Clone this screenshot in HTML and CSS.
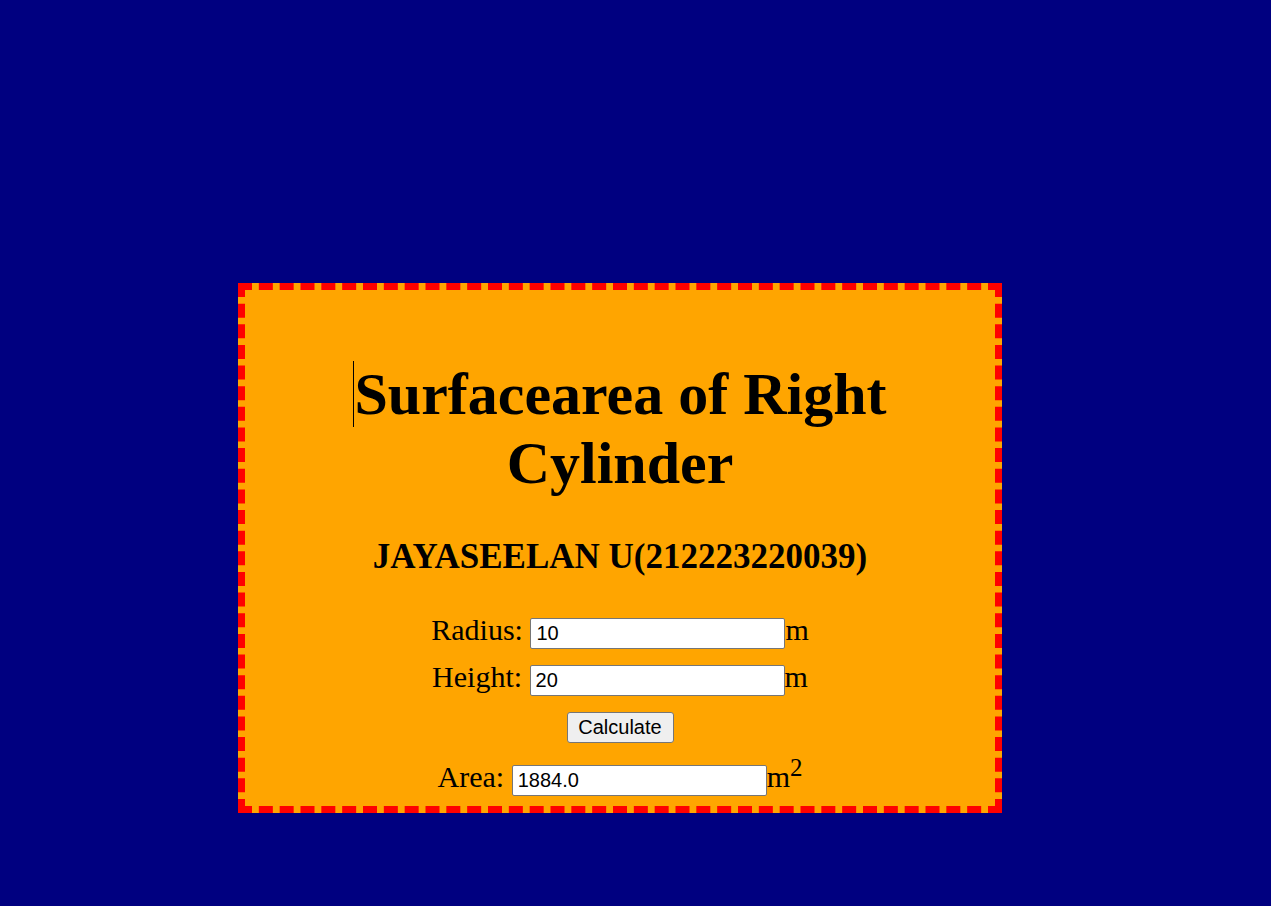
FILE: index.html
```html
<!DOCTYPE html>
<html>
<head>
<meta charset="utf-8">
<title>Surfacearea of Right Cylinder</title>
<link rel="stylesheet" href="styles.css">
</head>
<body>
<div class="card">
  <h1 class="title"><span class="caret"></span>Surfacearea of Right Cylinder</h1>
  <h2 class="sub">JAYASEELAN U(212223220039)</h2>
  <form class="form">
    <div class="row">Radius: <input class="field" type="text" value="10">m</div>
    <div class="row">Height: <input class="field" type="text" value="20">m</div>
    <div class="row"><button class="btn" type="button">Calculate</button></div>
    <div class="row area">Area: <input class="field" type="text" value="1884.0">m<sup class="sq">2</sup></div>
  </form>
</div>
</body>
</html>
```
FILE: styles.css
```css
html, body {
  margin: 0;
  padding: 0;
}
body {
  background: #000080;
  font-family: "Liberation Serif", "Times New Roman", serif;
  color: #000;
}
.card {
  box-sizing: border-box;
  width: 764px;
  height: 530px;
  margin: 283px 0 0 238px;
  padding-top: 70px;
  background: #ffa500;
  border: 7px dashed #ff0000;
  text-align: center;
}
.title {
  margin: 0;
  font-size: 60px;
  line-height: 69px;
  font-weight: bold;
}
.caret {
  display: inline-block;
  width: 1px;
  height: 66px;
  background: #000;
  vertical-align: -13px;
}
.sub {
  margin: 39px 0 0;
  font-size: 35px;
  line-height: 40px;
  font-weight: bold;
}
.form {
  margin: 29px 0 0;
}
.row {
  font-size: 30px;
  line-height: 47px;
}
.row.area {
  margin-top: 6px;
}
.field {
  box-sizing: border-box;
  width: 255px;
  height: 31px;
  padding: 1px 5px;
  margin: 0;
  border: 1px solid #767676;
  border-radius: 2px;
  background: #fff;
  font-family: "Liberation Sans", Arial, sans-serif;
  font-size: 20px;
  color: #000;
}
.btn {
  box-sizing: border-box;
  width: 107px;
  height: 31px;
  padding: 1px 6px;
  margin: 0;
  border: 1px solid #767676;
  border-radius: 3px;
  background: #efefef;
  font-family: "Liberation Sans", Arial, sans-serif;
  font-size: 20px;
  color: #000;
}
.sq {
  line-height: 0;
}
```
